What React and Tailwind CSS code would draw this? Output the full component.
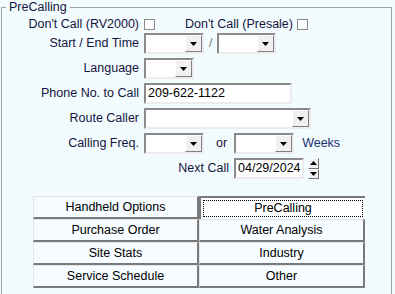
import React from 'react';

const font = { fontFamily: '"Liberation Sans", Arial, sans-serif' };

// sunken white field (classic Windows look)
const sunken =
  'border-2 border-t-[#8a8a8a] border-l-[#8a8a8a] border-b-[#ececec] border-r-[#ececec] bg-white';

function Arrow({ up = false }) {
  return (
    <svg width="7" height="4" viewBox="0 0 7 4" className="block">
      {up ? <path d="M3.5 0 L7 4 L0 4 Z" fill="#000" /> : <path d="M0 0 L7 0 L3.5 4 Z" fill="#000" />}
    </svg>
  );
}

function Combo({ w }) {
  return (
    <div className={`flex h-[21px] shrink-0 ${sunken} ${w}`}>
      <div className="flex-1" />
      <div className="flex h-full w-[17px] items-center justify-center border border-t-white border-l-white border-r-[#808080] border-b-[#808080] bg-[#f0f0f0]">
        <Arrow />
      </div>
    </div>
  );
}

function TextBox({ w, value }) {
  return (
    <div className={`flex h-[21px] shrink-0 items-center pl-[2px] text-black ${sunken} ${w}`}>
      {value}
    </div>
  );
}

function Check() {
  return <div className="h-[11px] w-[11px] shrink-0 border border-[#8a8a8a] bg-white" />;
}

function Row({ label, children, className = '' }) {
  return (
    <div className={`flex h-[21px] items-center ${className}`}>
      <div className="w-[138px] shrink-0 pr-[1px] text-right">{label}</div>
      <div className="ml-[4px] flex items-center">{children}</div>
    </div>
  );
}

const tabs = [
  ['Handheld Options', 'PreCalling'],
  ['Purchase Order', 'Water Analysis'],
  ['Site Stats', 'Industry'],
  ['Service Schedule', 'Other'],
];

function TabButton({ label, selected }) {
  if (selected) {
    return (
      <div className="h-[23px] border-l-2 border-t-2 border-[#7a7a7a] bg-white p-[2px]">
        <div className="flex h-full items-center justify-center border border-dotted border-black">
          {label}
        </div>
      </div>
    );
  }
  return (
    <div className="flex h-[23px] items-center justify-center border-l border-t border-r-2 border-b-2 border-t-[#e4e4e4] border-l-[#e4e4e4] border-r-[#7a7a7a] border-b-[#7a7a7a] bg-[#f6fcff]">
      {label}
    </div>
  );
}

export default function App() {
  return (
    <div className="h-[294px] w-[395px] overflow-hidden bg-[#f2fbfe] text-[12.5px] text-[#15153f]" style={font}>
      <fieldset className="ml-[1px] h-[320px] w-[391px] border border-[#a0a0a0]">
        <legend className="ml-[4px] px-[3px] leading-[14px]">PreCalling</legend>

        <div className="flex flex-col gap-[4px]">
          {/* Don't call checkboxes */}
          <Row label="Don't Call (RV2000)" className="mb-[-6px]">
            <Check />
            <span className="ml-[30px]">Don't Call (Presale)</span>
            <div className="ml-[4px]">
              <Check />
            </div>
          </Row>

          <Row label="Start / End Time">
            <Combo w="w-[60px]" />
            <span className="mx-[5px] text-[#777]">/</span>
            <Combo w="w-[59px]" />
          </Row>

          <Row label="Language">
            <Combo w="w-[50px]" />
          </Row>

          <Row label="Phone No. to Call">
            <TextBox w="w-[148px]" value="209-622-1122" />
          </Row>

          <Row label="Route Caller">
            <Combo w="w-[167px]" />
          </Row>

          <Row label="Calling Freq.">
            <Combo w="w-[60px]" />
            <span className="ml-[12px] mr-[7px]">or</span>
            <Combo w="w-[60px]" />
            <span className="ml-[8px] text-[#22306e]">Weeks</span>
          </Row>

          <div className="flex h-[21px] items-center">
            <div className="w-[227px] shrink-0 text-right">Next Call</div>
            <div className="ml-[5px]">
              <TextBox w="w-[70px]" value="04/29/2024" />
            </div>
            <div className="ml-[4px] flex h-[21px] w-[11px] flex-col">
              <div className="flex flex-1 items-center justify-center border border-t-white border-l-white border-r-[#707070] border-b-[#707070] bg-[#f0f0f0]">
                <Arrow up />
              </div>
              <div className="flex flex-1 items-center justify-center border border-t-white border-l-white border-r-[#707070] border-b-[#707070] bg-[#f0f0f0]">
                <Arrow />
              </div>
            </div>
          </div>
        </div>

        {/* section buttons */}
        <div className="ml-[31px] mt-[17px] grid w-[332px] grid-cols-[166px_166px] text-black">
          {tabs.map(([a, b]) => (
            <React.Fragment key={a}>
              <TabButton label={a} />
              <TabButton label={b} selected={b === 'PreCalling'} />
            </React.Fragment>
          ))}
        </div>
      </fieldset>
    </div>
  );
}
